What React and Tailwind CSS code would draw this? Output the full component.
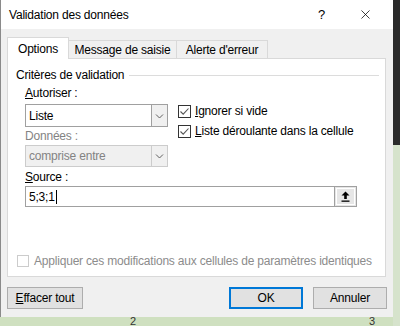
import { X } from 'lucide-react'

const FONT = { fontFamily: '"Liberation Sans", Arial, sans-serif' }

function Chevron() {
  return (
    <svg width="9" height="6" viewBox="0 0 9 6" className="block">
      <path d="M1 1.5 L4.5 5 L8 1.5" fill="none" stroke="#606060" strokeWidth="1" />
    </svg>
  )
}

function Combo({ value, disabled }) {
  return (
    <div
      className={`flex items-stretch border ${disabled ? 'border-[#cccccc] bg-[#f0f0f0]' : 'border-[#a0a0a0] bg-white'} h-full`}
    >
      <div className={`flex-1 flex items-center pl-[3px] ${disabled ? 'text-[#838383]' : 'text-black'}`}>{value}</div>
      <div className={`w-[16px] flex items-center justify-center border-l ${disabled ? 'border-[#cccccc]' : 'border-[#a0a0a0]'} bg-[#f0f0f0]`}>
        <Chevron />
      </div>
    </div>
  )
}

function Check({ u, rest }) {
  return (
    <div className="flex items-center h-[20px]">
      <div className="w-[13px] h-[13px] border border-[#333333] bg-white flex items-center justify-center">
        <svg width="11" height="11" viewBox="0 0 11 11">
          <path d="M1.5 5.5 L4.2 8.2 L9.5 2.5" fill="none" stroke="#555555" strokeWidth="1.1" />
        </svg>
      </div>
      <span className="ml-[4px] text-black">
        <u>{u}</u>{rest}
      </span>
    </div>
  )
}

export default function App() {
  return (
    <div className="w-[400px] h-[326px] flex bg-[#cfe0c0] text-[12px] leading-[16px] tracking-[-0.2px] overflow-hidden" style={FONT}>
      <div className="w-[393px] flex flex-col">
        {/* dialog */}
        <div className="h-[317px] bg-[#f0f0f0] border-l border-[#8a8a8a] flex flex-col">
          <div className="h-[29px] bg-white flex items-center pl-[8px] pr-[20px]">
            <span className="text-[12px] text-black">Validation des données</span>
            <span className="ml-auto text-[13px] text-black mr-[33px]">?</span>
            <X size={15} strokeWidth={1.2} className="text-black" />
          </div>

          <div className="pl-[6px] pt-[8px]">
            {/* tabs */}
            <div className="flex items-end h-[21px]">
              <div className="w-[62px] h-[22px] bg-white border border-b-0 border-[#d9d9d9] flex items-center justify-center relative -mb-px z-10">
                Options
              </div>
              <div className="w-[108px] h-[18px] border border-l-0 border-b-0 border-[#d9d9d9] flex items-center justify-center">
                Message de saisie
              </div>
              <div className="w-[91px] h-[18px] border border-l-0 border-b-0 border-[#d9d9d9] flex items-center justify-center">
                Alerte d'erreur
              </div>
            </div>

            {/* panel */}
            <div className="w-[379px] h-[219px] bg-white border border-[#d9d9d9] pt-[8px] pl-[8px] flex flex-col">
              <div className="flex items-center h-[16px] pr-[6px]">
                <span className="text-black">Critères de validation</span>
                <div className="flex-1 h-px bg-[#dcdcdc] ml-[5px]" />
              </div>

              <div className="pl-[9px] mt-[2px] flex">
                <div className="w-[143px] flex flex-col">
                  <div className="h-[16px] text-black"><u>A</u>utoriser :</div>
                  <div className="h-[23px] mt-[3px]"><Combo value="Liste" /></div>
                  <div className="h-[16px] mt-[1px] text-[#838383]">Données :</div>
                  <div className="h-[22px] mt-[1px]"><Combo value="comprise entre" disabled /></div>
                </div>
                <div className="ml-[10px] mt-[16px] flex flex-col">
                  <Check u="I" rest="gnorer si vide" />
                  <Check u="L" rest="iste déroulante dans la cellule" />
                </div>
              </div>

              <div className="pl-[9px] mt-[2px] h-[16px] text-black"><u>S</u>ource :</div>
              <div className="ml-[9px] mt-[1px] w-[332px] h-[21px] border border-[#a0a0a0] flex items-stretch">
                <div className="flex-1 flex items-center pl-[3px] text-black">
                  5;3;1<span className="inline-block w-px h-[14px] bg-black ml-[1px]" />
                </div>
                <div className="w-[22px] bg-[#e6e6e6] border-l border-[#a0a0a0] flex items-center justify-center p-[1px]">
                  <div className="w-full h-full border border-[#ffffff] flex items-center justify-center">
                    <svg width="9" height="11" viewBox="0 0 9 11">
                      <path d="M4.5 0.5 L8.5 4.5 L5.8 4.5 L5.8 8 L3.2 8 L3.2 4.5 L0.5 4.5 Z" fill="#000" />
                      <rect x="0.5" y="9.5" width="8" height="1.3" fill="#000" />
                    </svg>
                  </div>
                </div>
              </div>

              <div className="mt-[46px] flex items-center h-[16px] pl-[1px]">
                <div className="w-[12px] h-[12px] border border-[#cccccc] bg-white" />
                <span className="ml-[5px] text-[#8c8c8c] whitespace-nowrap">Appliquer ces modifications aux cellules de paramètres identiques</span>
              </div>
            </div>
          </div>

          {/* buttons */}
          <div className="flex items-center pl-[6px] mt-[10px]">
            <div className="w-[76px] h-[22px] bg-[#e1e1e1] border border-[#adadad] flex items-center justify-center text-black">
              <span><u>E</u>ffacer tout</span>
            </div>
            <div className="ml-auto w-[74px] h-[22px] bg-[#e1e1e1] border-2 border-[#0078d7] flex items-center justify-center text-black">
              OK
            </div>
            <div className="ml-[10px] mr-[6px] w-[74px] h-[22px] bg-[#e1e1e1] border border-[#adadad] flex items-center justify-center text-black">
              Annuler
            </div>
          </div>
        </div>
        {/* sheet behind */}
        <div className="flex h-[9px] text-[11px] leading-[9px] text-[#333333]">
          <span className="ml-[130px]">2</span>
          <span className="ml-[233px]">3</span>
        </div>
      </div>
      <div className="w-[7px] flex flex-col">
        <div className="h-[145px] bg-[#2b2b2b]" />
        <div className="flex-1 bg-[#d6e3cc]" />
      </div>
    </div>
  )
}
